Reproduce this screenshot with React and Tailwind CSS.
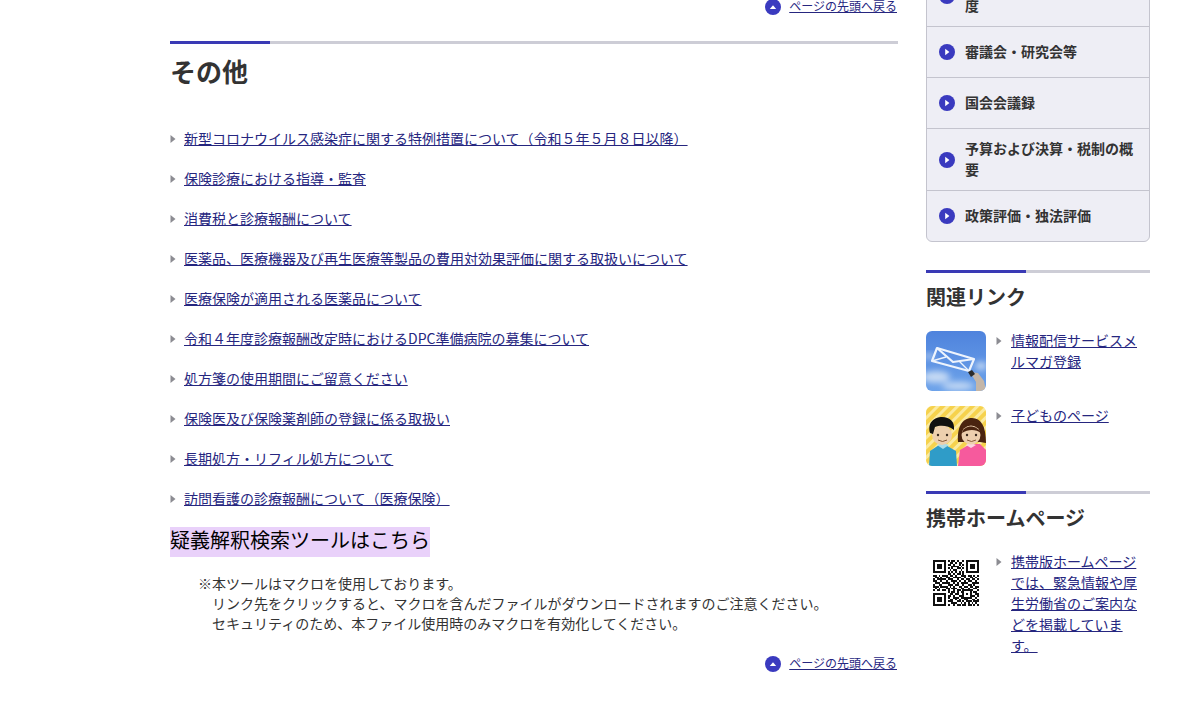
import React from 'react';

const links = [
  '新型コロナウイルス感染症に関する特例措置について（令和５年５月８日以降）',
  '保険診療における指導・監査',
  '消費税と診療報酬について',
  '医薬品、医療機器及び再生医療等製品の費用対効果評価に関する取扱いについて',
  '医療保険が適用される医薬品について',
  '令和４年度診療報酬改定時におけるDPC準備病院の募集について',
  '処方箋の使用期間にご留意ください',
  '保険医及び保険薬剤師の登録に係る取扱い',
  '長期処方・リフィル処方について',
  '訪問看護の診療報酬について（医療保険）',
];

const sideMenu = [
  '診療報酬に関する通知の制度',
  '審議会・研究会等',
  '国会会議録',
  '予算および決算・税制の概要',
  '政策評価・独法評価',
];

const qrRows = [
  '1111111010110100101111111',
  '1000001001101011001000001',
  '1011101011010010101011101',
  '1011101000111101001011101',
  '1011101010100110101011101',
  '1000001001011001001000001',
  '1111111010101010101111111',
  '0000000011010110100000000',
  '1101011101101001110110101',
  '0110100110011110010011010',
  '1011111011100101101101101',
  '1100100100111010010110010',
  '0111011110010101111001111',
  '1001100011101100100110100',
  '1110111101010011011011011',
  '0101000110111001100100110',
  '1011011010010110111111001',
  '0000000010110101100010110',
  '1111111001101100101010011',
  '1000001011010011100011101',
  '1011101010011101111110010',
  '1011101001101010011001101',
  '1011101011100110101110111',
  '1000001000111001010101010',
  '1111111010010110110110101',
];

const Arrow = () => (
  <svg width="6" height="10" viewBox="0 0 6 10" className="shrink-0 mt-[6px]">
    <path d="M0.5 1 L5.5 5 L0.5 9 Z" fill="#8c8c92" />
  </svg>
);

const CircleIcon = ({ up }) => (
  <svg width="16" height="16" viewBox="0 0 16 16" className="shrink-0">
    <circle cx="8" cy="8" r="8" fill="#3a3abf" />
    {up ? <path d="M4.8 10 L8 6.2 L11.2 10 Z" fill="#fff" /> : <path d="M6.2 4.8 L10.4 8 L6.2 11.2 Z" fill="#fff" />}
  </svg>
);

const Bar = () => (
  <div className="flex h-[3px] bg-[#cdcdd6]">
    <div className="w-[100px] bg-[#3a3ab5]" />
  </div>
);

const PageTop = () => (
  <div className="flex justify-end items-center gap-2 h-[21px] pr-px text-xs">
    <CircleIcon up />
    <a href="#" className="underline text-[#26267f] pb-[2px]">ページの先頭へ戻る</a>
  </div>
);

const MailPicture = () => (
  <svg viewBox="0 0 60 60" className="w-[60px] h-[60px] rounded-md shrink-0">
    <defs>
      <linearGradient id="sky" x1="0" y1="0" x2="0" y2="1">
        <stop offset="0" stopColor="#4f83dd" />
        <stop offset="1" stopColor="#6da3ea" />
      </linearGradient>
      <filter id="soft"><feGaussianBlur stdDeviation="3" /></filter>
    </defs>
    <rect width="60" height="60" fill="url(#sky)" />
    <g fill="#c6daf4" filter="url(#soft)">
      <ellipse cx="10" cy="46" rx="14" ry="6" />
      <ellipse cx="32" cy="55" rx="16" ry="4" />
      <ellipse cx="3" cy="25" rx="6" ry="2" />
      <ellipse cx="55" cy="35" rx="6" ry="4" />
    </g>
    <g fill="none" stroke="#eef4fd" strokeWidth="2.2" strokeLinejoin="round">
      <path d="M11 17 L48 28 L43 40 L6 30 Z" />
      <path d="M11 17 L27 31 L48 28" />
      <path d="M6 30 L20 26 M43 40 L33 30" strokeWidth="1.4" />
    </g>
    <path d="M44 41 L52 42 L58 50 L60 60 L50 60 L50 51 Z" fill="#c4b6a8" />
    <path d="M42 41 L46 39 L49 43 L45 46 Z" fill="#2b2b2b" />
  </svg>
);

const KidsPicture = () => (
  <svg viewBox="0 0 60 60" className="w-[60px] h-[60px] rounded-md shrink-0">
    <defs>
      <pattern id="stripes" width="7" height="7" patternUnits="userSpaceOnUse" patternTransform="rotate(45)">
        <rect width="7" height="7" fill="#f6d24d" />
        <rect width="3" height="7" fill="#fbeaa0" />
      </pattern>
    </defs>
    <rect width="60" height="60" fill="url(#stripes)" />
    <path d="M32 60 L34 44 L44 38 L54 38 L60 44 L60 60 Z" fill="#f65a9d" />
    <path d="M3 60 L4 45 L16 37 L30 45 L31 60 Z" fill="#2f9cc8" />
    <path d="M11 39 L17 37 L23 39 L17 43 Z" fill="#a9dcea" />
    <path d="M40 39 L45 37 L50 39 L45 42 Z" fill="#fbd3e0" />
    <path d="M32 36 C31 18 38 12 46 12 C55 12 60 20 60 37 L54 36 L36 36 Z" fill="#4a2410" />
    <ellipse cx="45" cy="29" rx="9.5" ry="9.5" fill="#edcfae" />
    <path d="M36 27 C38 19 50 18 55 27 C50 23 42 23 36 27 Z" fill="#4a2410" />
    <ellipse cx="16" cy="29" rx="10" ry="10" fill="#edcfae" />
    <path d="M4 27 C1 16 9 11 16 11 C24 11 29 16 28 24 C22 19 14 19 9 21 L7 28 Z" fill="#111" />
    <g fill="#3a2a20">
      <circle cx="12" cy="29" r="1.2" />
      <circle cx="21" cy="29" r="1.2" />
      <circle cx="41" cy="29" r="1.2" />
      <circle cx="50" cy="29" r="1.2" />
    </g>
    <path d="M12 34 Q16.5 37 21 34 M41 34 Q45.5 37 50 34" fill="none" stroke="#8a5a3a" strokeWidth="1" />
  </svg>
);

const QrCode = () => (
  <div className="w-[60px] h-[60px] flex items-start justify-center shrink-0 pt-[8px]">
    <svg viewBox="0 0 25 25" className="w-[46px] h-[46px]" shapeRendering="crispEdges">
      {qrRows.map((row, y) =>
        row.split('').map((cell, x) =>
          cell === '1' ? <rect key={`${x}-${y}`} x={x} y={y} width="1" height="1" fill="#111" /> : null
        )
      )}
    </svg>
  </div>
);

const SideLink = ({ picture, children }) => (
  <div className="flex gap-[10px]">
    {picture}
    <div className="flex gap-[9px] flex-1 -mt-px leading-[21px] text-sm">
      <Arrow />
      <a href="#" className="underline text-[#26267f] flex-1 pr-[10px]">{children}</a>
    </div>
  </div>
);

export default function App() {
  return (
    <div className="h-[719px] overflow-hidden bg-white text-[#333] font-['Noto_Sans_CJK_JP','Noto_Sans',sans-serif]">
      <div className="flex gap-[28px] ml-[170px] w-[980px] -mt-[37px]">
        <main className="w-[728px] pt-[33px]">
          <PageTop />
          <div className="mt-[24px]">
            <Bar />
          </div>
          <h2 className="text-[26px] font-bold leading-[54px]">その他</h2>
          <ul className="mt-[21px]">
            {links.map((text) => (
              <li key={text} className="flex gap-2 h-10 items-center text-sm leading-[21px]">
                <svg width="6" height="10" viewBox="0 0 6 10" className="shrink-0">
                  <path d="M0.5 1 L5.5 5 L0.5 9 Z" fill="#8c8c92" />
                </svg>
                <a href="#" className="underline text-[#26267f] pb-[2px]">{text}</a>
              </li>
            ))}
          </ul>
          <div className="mt-[8px] w-[260px] h-[30px] bg-[#e9d1fa] text-black text-xl leading-[26px] whitespace-nowrap">
            疑義解釈検索ツールはこちら
          </div>
          <div className="mt-[16px] text-sm leading-5">
            <p className="pl-[28px]">※本ツールはマクロを使用しております。</p>
            <p className="pl-[42px]">リンク先をクリックすると、マクロを含んだファイルがダウンロードされますのご注意ください。</p>
            <p className="pl-[42px]">セキュリティのため、本ファイル使用時のみマクロを有効化してください。</p>
          </div>
          <div className="mt-[20px]">
            <PageTop />
          </div>
        </main>

        <aside className="w-[224px] mt-px">
          <ul className="border border-[#c4c4ce] rounded-md bg-[#eeeef5] overflow-hidden">
            {sideMenu.map((text, i) => (
              <li
                key={text}
                className={`flex items-center gap-[10px] pl-[12px] pr-[8px] py-[8.5px] text-sm font-bold leading-[21px] ${i < sideMenu.length - 1 ? 'min-h-[51px] border-b border-[#c4c4ce]' : 'min-h-[50px]'}`}
              >
                <CircleIcon />
                <span className="pb-[2px]">{text}</span>
              </li>
            ))}
          </ul>

          <div className="mt-[28px]">
            <Bar />
          </div>
          <h3 className="text-xl font-bold leading-[48px]">関連リンク</h3>
          <div className="mt-[10px] flex flex-col gap-[15px]">
            <SideLink picture={<MailPicture />}>情報配信サービスメルマガ登録</SideLink>
            <SideLink picture={<KidsPicture />}>子どものページ</SideLink>
          </div>

          <div className="mt-[25px]">
            <Bar />
          </div>
          <h3 className="text-xl font-bold leading-[48px]">携帯ホームページ</h3>
          <div className="mt-[10px]">
            <SideLink picture={<QrCode />}>携帯版ホームページでは、緊急情報や厚生労働省のご案内などを掲載しています。</SideLink>
          </div>
        </aside>
      </div>
    </div>
  );
}
